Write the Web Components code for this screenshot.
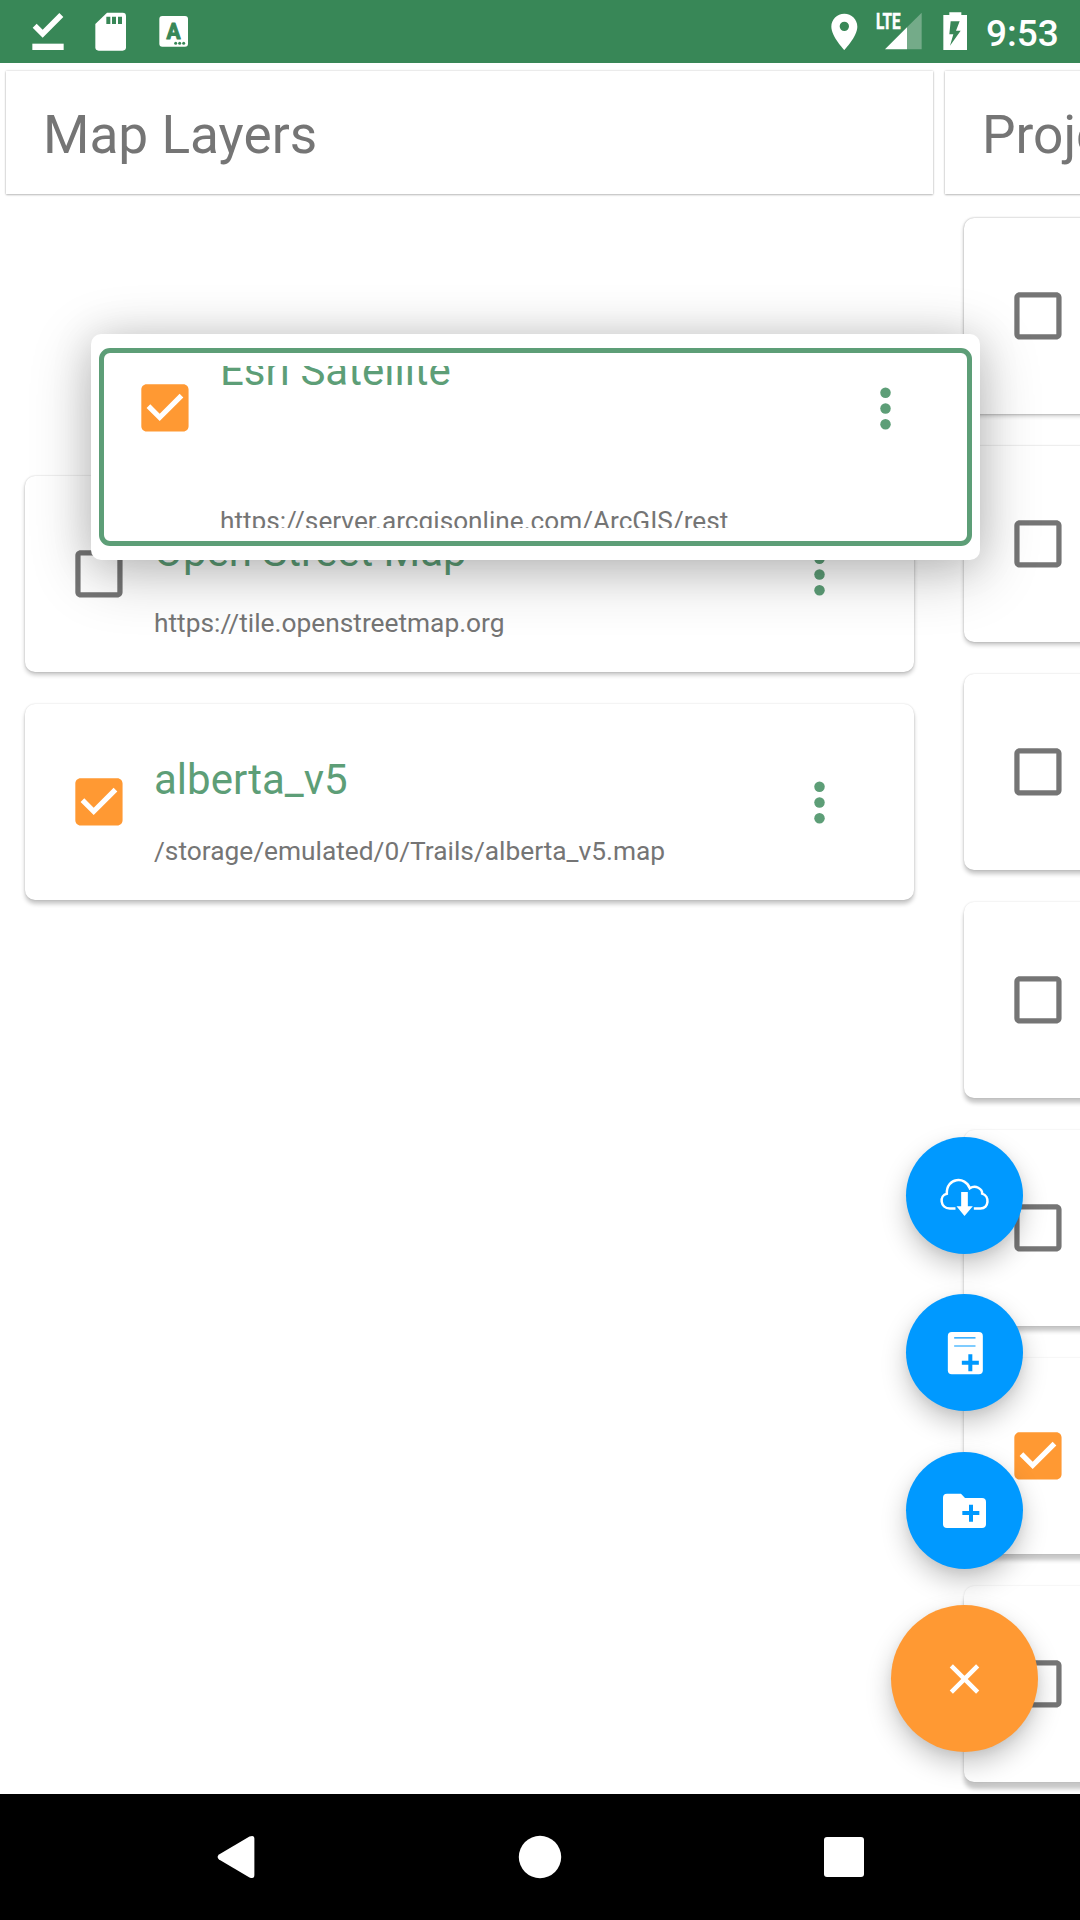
<!DOCTYPE html>
<html lang="en">
<head>
<meta charset="utf-8">
<title>Map Layers</title>
<style>
html,body{margin:0;height:1920px;width:1080px;overflow:hidden;background:#fff;font-family:Roboto,"Noto Sans",sans-serif}
</style>
</head>
<body>
<map-app></map-app>
<script>
const define = (name, html, setup) => {
  const t = document.createElement('template');
  t.innerHTML = html;
  customElements.define(name, class extends HTMLElement {
    constructor() {
      super();
      this.attachShadow({mode: 'open'}).appendChild(t.content.cloneNode(true));
    }
    connectedCallback() { if (setup) setup(this, this.shadowRoot); }
  });
};

define('status-bar', `
<style>
:host{display:flex;height:63px;background:#388757;justify-content:space-between;flex:none}
.g{display:flex;height:63px}
svg{display:block;height:63px}
.clock{font:500 37px/63px Roboto,sans-serif;color:#fff;margin-left:19px;padding-top:2px;width:94px;height:61px;white-space:nowrap}
</style>
<div class="g">
<svg width="200" viewBox="0 0 600 189" fill="#fff">
 <path d="M98 83l12-12 18 18 50-50 12 12-62 62z"/><path d="M97 131h94v19H97z"/>
 <path d="M321 38h47a10 10 0 0 1 10 10v94a10 10 0 0 1-10 10h-72a10 10 0 0 1-10-10V72z"/>
 <path fill="#388757" d="M319 50h12v22h-12zM336 50h12v22h-12zM354 50h12v22h-12z"/>
 <rect x="478" y="48" width="86" height="92" rx="9"/>
 <text x="520.5" y="116" text-anchor="middle" font-family="Roboto,sans-serif" font-weight="700" font-size="64" textLength="42" lengthAdjust="spacingAndGlyphs" fill="#388757" stroke="#388757" stroke-width="3" stroke-linejoin="round">A</text>
 <g fill="#388757"><circle cx="527" cy="130" r="4.5"/><circle cx="539" cy="130" r="4.5"/><circle cx="551" cy="130" r="4.5"/></g>
</svg>
</div>
<div class="g">
<svg width="140" viewBox="140 0 420 189" fill="#fff">
 <path fill-rule="evenodd" d="M192 41c-22 0-39 17-39 39 0 29 39 70 39 70s39-41 39-70c0-22-17-39-39-39zm0 24a14 14 0 1 1 0 28 14 14 0 0 1 0-28z"/>
 <path opacity=".3" d="M380 82l44-44v110h-44z"/><path d="M314 148l66-66v66z"/>
 <text x="287" y="87" font-family="Roboto,sans-serif" font-weight="700" font-size="66" textLength="74" lengthAdjust="spacingAndGlyphs" stroke="#fff" stroke-width="1.5">LTE</text>
 <path fill-rule="evenodd" d="M507 37h36v8h18v105h-72V45h18zM511 64l-4 39h12l-10 34 32-45h-14l11-28z"/>
</svg>
<div class="clock">9:53</div>
</div>`);

define('column-header', `
<style>
:host{display:flex;align-items:center;box-sizing:border-box;height:123px;margin:8px 6px 0;padding:5px 37px 0;background:#fff;font-size:53.2px;line-height:62px;color:#757575;
box-shadow:0 0 2px rgba(0,0,0,.2),0 1px 2px rgba(0,0,0,.22)}
</style><slot></slot>`);

define('check-box', `
<style>:host{display:block;flex:none;width:63px;height:63px}svg{display:block}</style>
<svg width="63" height="63" viewBox="-.17 -.17 24 24"><path/></svg>`,
(el, r) => {
  const on = el.hasAttribute('checked'), p = r.querySelector('path');
  p.setAttribute('fill', on ? '#ff9933' : '#757575');
  p.setAttribute('d', on
    ? 'M19 3H5c-1.11 0-2 .9-2 2v14c0 1.1.89 2 2 2h14c1.11 0 2-.9 2-2V5c0-1.1-.89-2-2-2zm-9 14l-5-5 1.41-1.41L10 14.17l7.59-7.59L19 8l-9 9z'
    : 'M19 5v14H5V5h14m0-2H5c-1.1 0-2 .9-2 2v14c0 1.1.9 2 2 2h14c1.1 0 2-.9 2-2V5c0-1.1-.9-2-2-2z');
});

define('more-dots', `
<style>:host{display:block;flex:none;width:63px;height:63px}svg{display:block}</style>
<svg width="63" height="63" viewBox="0 0 24 24" fill="#5d9e77"><circle cx="12" cy="6" r="2"/><circle cx="12" cy="12" r="2"/><circle cx="12" cy="18" r="2"/></svg>`);

define('layer-card', `
<style>
:host{display:flex;align-items:center;box-sizing:border-box;width:889px;height:196px;padding-left:42px;border-radius:10px;background:#fff;
box-shadow:0 0 2px rgba(0,0,0,var(--edge,.2)),0 var(--drop,3px) 4px rgba(0,0,0,.22)}
check-box{margin-bottom:1px}
.t{align-self:flex-start;width:634px;margin-left:24px;padding-top:51px;white-space:nowrap}
.title{display:block;font-size:42px;line-height:50px;color:#5d9e77}
.sub{display:block;margin-top:31px;font-size:26.3px;line-height:31px;color:#757575}
</style>
<check-box></check-box>
<div class="t"><span class="title"><slot></slot></span><span class="sub"><slot name="source"></slot></span></div>
<more-dots></more-dots>`,
(el, r) => {
  if (el.hasAttribute('checked')) {
    const c = document.createElement('check-box');
    c.setAttribute('checked', '');
    r.querySelector('check-box').replaceWith(c);
  }
});

define('dragged-card', `
<style>
:host{display:block;box-sizing:border-box;width:889px;height:226px;padding:14px 8px;border-radius:10px;background:#fff;
box-shadow:0 13px 62px rgba(0,0,0,.24),0 3px 40px rgba(0,0,0,.13)}
.frame{box-sizing:border-box;height:198px;border:5px solid #5d9e77;border-radius:11px;padding:13px 0}
.clip{display:flex;height:162px;overflow:hidden;padding-left:29px}
check-box{margin-top:10px}
more-dots{margin-top:10.5px}
.t{width:634px;margin-left:24px;white-space:nowrap}
.title{display:block;margin-top:-20px;font-size:42px;line-height:50px;color:#5d9e77}
.sub{display:block;margin-top:109.5px;font-size:26.2px;line-height:31px;color:#757575}
</style>
<div class="frame"><div class="clip">
<check-box checked></check-box>
<div class="t"><span class="title"><slot></slot></span><span class="sub"><slot name="source"></slot></span></div>
<more-dots></more-dots>
</div></div>`);

define('board-column', `
<style>
:host{display:block;flex:none;width:939px}
.list{display:flex;flex-direction:column;gap:32px;padding:24px 25px 0}
</style>
<slot name="header"></slot><div class="list"><slot></slot></div>`);

define('fab-button', `
<style>
:host{display:flex;align-items:center;justify-content:center;width:117px;height:117px;border-radius:50%;background:#0099ff;
box-shadow:0 12px 26px rgba(0,0,0,.22),0 3px 10px rgba(0,0,0,.06)}
:host([main]){width:147px;height:147px;background:#ff9933}
</style><slot></slot>`);

define('nav-bar', `
<style>
:host{display:flex;flex:none;height:126px;background:#000;align-items:center;justify-content:space-between;padding:0 216px}
svg{display:block}
</style>
<svg width="40" height="44" viewBox="0 0 40 44"><path fill="#fff" d="M3 19.500L33.500 1.600Q38.400 -.5 38.400 4V40Q38.400 44.500 33.500 42.400L3 24.500Q.2 22 3 19.500z"/></svg>
<svg width="44" height="44"><circle cx="22" cy="22" r="21.200" fill="#fff"/></svg>
<svg width="40" height="40"><rect width="40" height="40" rx="3" fill="#fff"/></svg>`);

define('map-app', `
<style>
:host{display:flex;flex-direction:column;position:relative;width:1080px;height:1920px;overflow:hidden}
.board{display:flex;flex:1;min-height:0;overflow:hidden}
.gap{height:226px}
dragged-card{position:absolute;left:91px;top:334px}
.fabs{position:absolute;right:42px;top:1137px;width:147px;display:flex;flex-direction:column;align-items:center;gap:40px}
.fabs svg{display:block;overflow:visible;margin-right:1px}
.fabs .folder{margin-top:1px}
.fabs [main]{margin-top:-4px}
</style>
<status-bar></status-bar>
<div class="board">
 <board-column>
  <column-header slot="header">Map Layers</column-header>
  <div class="gap"></div>
  <layer-card>Open Street Map<span slot="source">https://tile.openstreetmap.org</span></layer-card>
  <layer-card checked style="--drop:4px;--edge:.17">alberta_v5<span slot="source">/storage/emulated/0/Trails/alberta_v5.map</span></layer-card>
 </board-column>
 <board-column>
  <column-header slot="header">Projects</column-header>
  <layer-card style="--drop:2px;--edge:.3"></layer-card>
  <layer-card style="--drop:3px;--edge:.22"></layer-card>
  <layer-card style="--drop:4px;--edge:.18"></layer-card>
  <layer-card style="--drop:5px;--edge:.15"></layer-card>
  <layer-card style="--drop:5px;--edge:.13"></layer-card>
  <layer-card checked style="--drop:6px;--edge:.12"></layer-card>
  <layer-card style="--drop:7px;--edge:.12"></layer-card>
 </board-column>
</div>
<nav-bar></nav-bar>
<dragged-card>Esri Satellite<span slot="source">https://server.arcgisonline.com/ArcGIS/rest</span></dragged-card>
<div class="fabs">
 <fab-button><svg width="50" height="40" viewBox="237.500 197 150 120"><path fill="none" stroke="#fff" stroke-width="7.500" d="M287 294.500H270C240 294.500 238 254 261 250C259 202 317 196 330 234C347 222 368 236 367 250C390 257 388 294.500 362 294.500H342"/><path fill="#fff" d="M304 245h20v43h15l-25 29-24-29h14z"/></svg></fab-button>
 <fab-button><svg width="36" height="44" viewBox="258.500 662 108 132"><rect x="264" y="665" width="105" height="127" rx="12" fill="#fff"/><path stroke="#0099ff" stroke-width="3.500" d="M283 682.500h64M283 707h64"/><path stroke="#0099ff" stroke-width="12" d="M306 757h51M331.500 732v51"/></svg></fab-button>
 <fab-button class="folder"><svg width="44" height="36" viewBox="246 218 132 108"><path fill="#fff" d="M261 220h42l12 13h51a12 12 0 0 1 12 12v66a12 12 0 0 1-12 12H261a12 12 0 0 1-12-12V232a12 12 0 0 1 12-12z"/><path stroke="#0099ff" stroke-width="12" d="M307 278h51M333 253v51"/></svg></fab-button>
 <fab-button main><svg width="32" height="32" viewBox="264 728 96 96"><path stroke="#fff" stroke-width="13.500" d="M274 736.500l79 79M353 736.500l-79 79"/></svg></fab-button>
</div>`);
</script>
</body>
</html>
